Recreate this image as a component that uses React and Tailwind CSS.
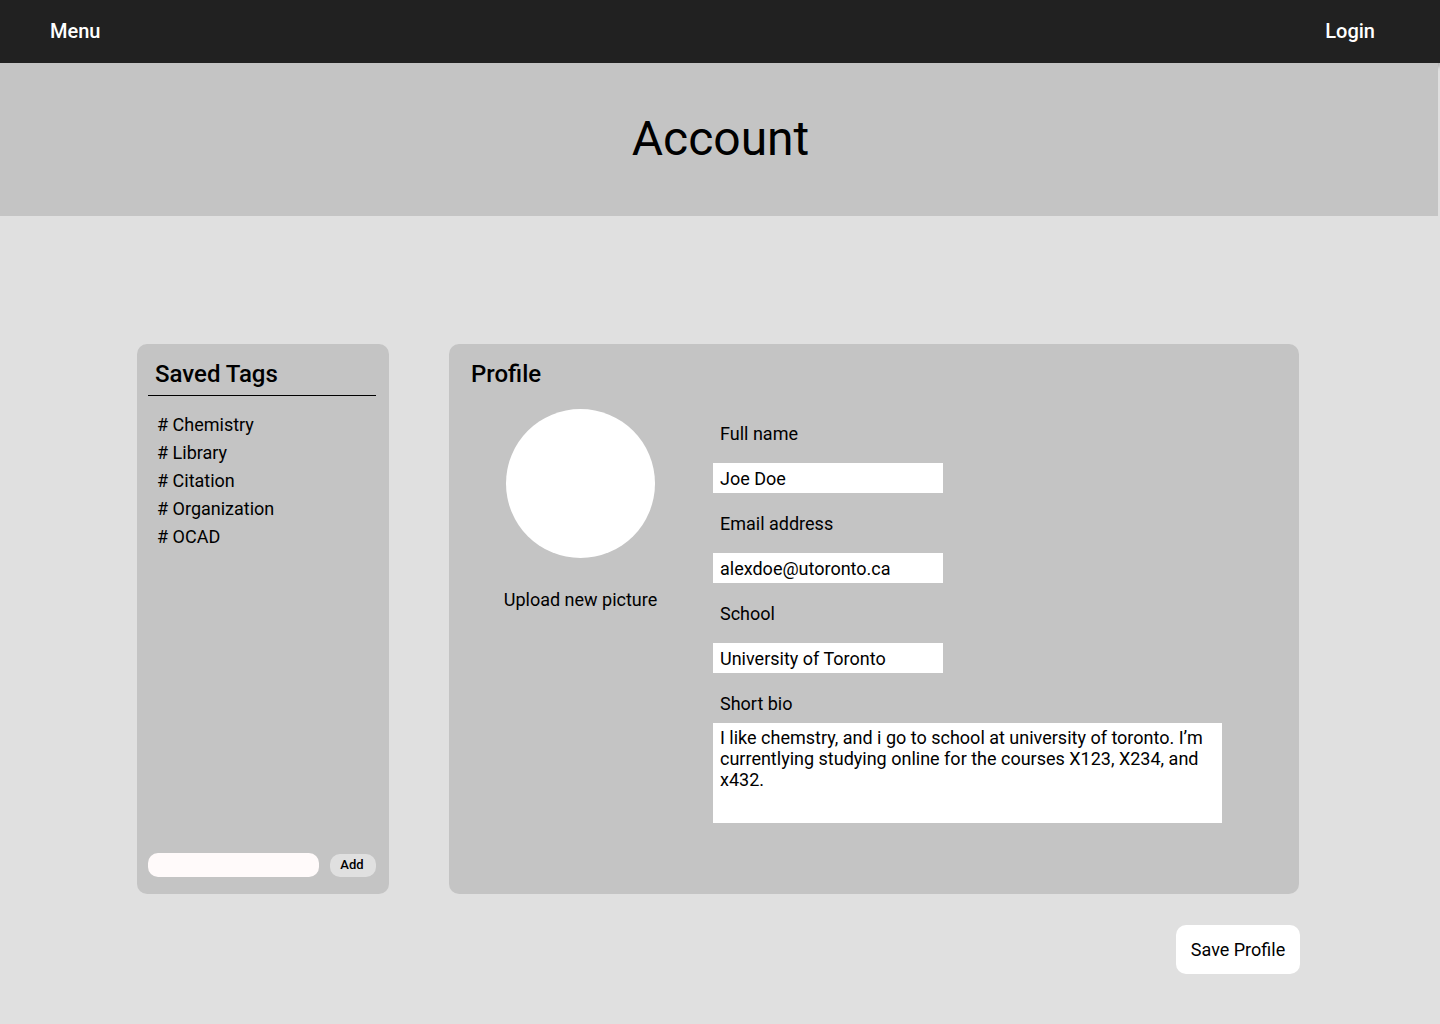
const tags = ["Chemistry", "Library", "Citation", "Organization", "OCAD"];

const fields = [
  { id: "name", label: "Full name", value: "Joe Doe", type: "text" },
  { id: "email", label: "Email address", value: "alexdoe@utoronto.ca", type: "email" },
  { id: "school", label: "School", value: "University of Toronto", type: "text" },
];

function Header() {
  return (
    <header className="flex h-[63px] items-center justify-between bg-[#212121] pr-[65px] pb-[2px] pl-[50px] text-xl font-medium text-white shadow-[0_4px_4px_rgba(0,0,0,0.25)]">
      <button type="button">Menu</button>
      <a href="#login">Login</a>
    </header>
  );
}

function SavedTags() {
  return (
    <section className="flex min-h-[550px] w-[252px] shrink-0 flex-col rounded-[10px] bg-[#c4c4c4] pt-3 pr-[13px] pb-[17px] pl-[11px]">
      <h2 className="border-b border-black px-[7px] pt-[2px] pb-[5px] text-2xl font-medium">Saved Tags</h2>
      <ul className="mt-[15px] px-[9px] text-lg leading-7">
        {tags.map((tag) => (
          <li key={tag}># {tag}</li>
        ))}
      </ul>
      <form className="mt-auto flex items-end gap-[11px]" onSubmit={(e) => e.preventDefault()}>
        <input aria-label="New tag" className="h-6 min-w-0 flex-1 rounded-[10px] bg-[#fffafa] px-2 text-sm outline-none" />
        <button type="submit" className="h-[23px] w-[46px] rounded-[10px] bg-[#e0e0e0] pr-[2px] pb-[2px] text-[13px] font-medium">
          Add
        </button>
      </form>
    </section>
  );
}

function Profile() {
  return (
    <section className="min-h-[550px] flex-1 rounded-[10px] bg-[#c4c4c4] pt-3.5 pr-[77px] pl-[22px]">
      <h2 className="text-2xl font-medium">Profile</h2>
      <div className="flex gap-[53px]">
        <div className="flex w-[189px] shrink-0 flex-col items-center gap-7 pt-[19px] pl-[30px]">
          <div className="size-[149px] rounded-full bg-white" />
          <button type="button" className="text-lg whitespace-nowrap">
            Upload new picture
          </button>
        </div>
        <div className="min-w-0 flex-1 pt-[29px] text-lg">
          {fields.map((f) => (
            <div key={f.id} className="flex h-[90px] flex-col">
              <label htmlFor={f.id} className="h-[44px] px-[7px] leading-[30px]">
                {f.label}
              </label>
              <input id={f.id} type={f.type} defaultValue={f.value} className="h-[30px] w-[230px] bg-white px-[7px] outline-none" />
            </div>
          ))}
          <label htmlFor="bio" className="block px-[7px] leading-[30px]">
            Short bio
          </label>
          <textarea
            id="bio"
            className="mt-1 block h-[100px] w-full resize-none overflow-hidden bg-white px-[7px] py-1 leading-[21px] outline-none"
            defaultValue="I like chemstry, and i go to school at university of toronto. I’m currentlying studying online for the courses X123, X234, and x432."
          />
        </div>
      </div>
    </section>
  );
}

export default function App() {
  return (
    <div className="min-h-screen bg-[#e0e0e0] font-[Roboto,sans-serif] text-black">
      <Header />
      <div className="relative mr-[2px] flex h-[153px] items-center justify-center bg-[#c4c4c4] pb-[2px] pl-[3px]">
        <h1 className="text-5xl">Account</h1>
      </div>
      <main className="pt-32 pr-[140px] pb-[50px] pl-[137px]">
        <div className="mr-px flex gap-[60px]">
          <SavedTags />
          <Profile />
        </div>
        <div className="mt-[31px] flex justify-end">
          <button type="button" className="h-[49px] w-[124px] rounded-[10px] bg-white text-lg">
            Save Profile
          </button>
        </div>
      </main>
    </div>
  );
}
